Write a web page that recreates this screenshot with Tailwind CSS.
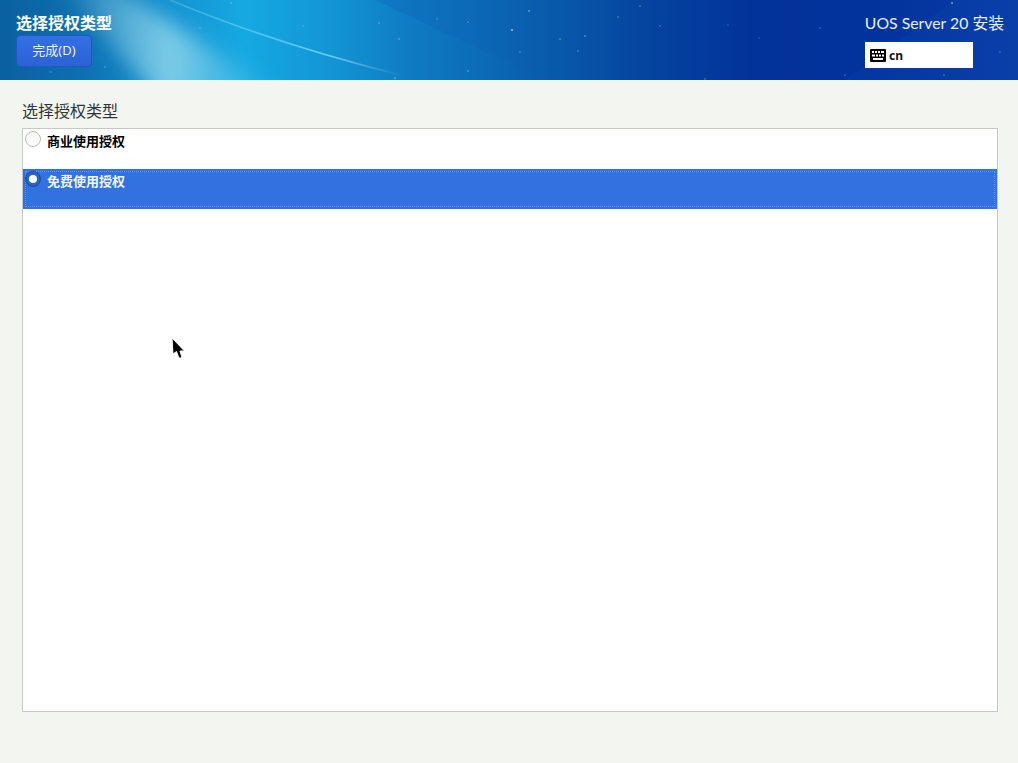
<!DOCTYPE html>
<html lang="zh-CN">
<head>
  <meta charset="UTF-8" />
  <meta name="viewport" content="width=device-width, initial-scale=1.0" />
  <title>选择授权类型</title>
  <script src="https://cdn.jsdelivr.net/npm/@tailwindcss/browser@4"></script>
</head>
<body class="relative w-[1018px] h-[763px] overflow-hidden bg-[#f3f5f1] font-['Noto_Sans','Noto_Sans_CJK_SC',sans-serif]">

  <!-- header -->
  <header class="relative h-[80px] overflow-hidden bg-[linear-gradient(90deg,#0a60a0_0%,#0d70b0_8%,#1590cf_16%,#15a9e2_24%,#1496d6_32%,#0f7cc4_40%,#0a5fae_52%,#05449f_63%,#02339a_74%,#02329c_86%,#0a3ca6_100%)]">
    <!-- wallpaper: light streak, curve, stars -->
    <svg class="absolute inset-0" width="1018" height="80" viewBox="0 0 1018 80">
      <defs>
        <linearGradient id="streak" x1="0" y1="0" x2="1" y2="0">
          <stop offset="0" stop-color="#a8dce8" stop-opacity="0"/>
          <stop offset="0.5" stop-color="#a0e0f0" stop-opacity="0.75"/>
          <stop offset="1" stop-color="#5cc8ee" stop-opacity="0"/>
        </linearGradient>
        <linearGradient id="curve" x1="0" y1="0" x2="1" y2="0">
          <stop offset="0" stop-color="#7fdcf5" stop-opacity="0.3"/>
          <stop offset="0.7" stop-color="#7fdcf5" stop-opacity="0.8"/>
          <stop offset="1" stop-color="#7fdcf5" stop-opacity="0"/>
        </linearGradient>
        <linearGradient id="band" x1="0" y1="0" x2="1" y2="0">
          <stop offset="0" stop-color="#0a58ae" stop-opacity="0.25"/>
          <stop offset="1" stop-color="#0a58ae" stop-opacity="0"/>
        </linearGradient>
        <filter id="blur"><feGaussianBlur stdDeviation="10"/></filter>
        <filter id="soft"><feGaussianBlur stdDeviation="0.6"/></filter>
      </defs>
      <polygon points="55,-20 105,-20 290,100 160,100" fill="url(#streak)" filter="url(#blur)"/>
      <path d="M170 0 C230 25 300 50 400 75" fill="none" stroke="url(#curve)" stroke-width="1.6" filter="url(#soft)"/>
      <polygon points="375,0 680,0 680,80 545,80" fill="url(#band)"/>
      <polygon points="955,0 1018,0 1018,80 845,80" fill="#0a46b0" opacity="0.25"/>
      <g fill="#a8d8f5">
        <circle cx="231" cy="3" r="1" opacity=".45"/><circle cx="200" cy="28" r=".9" opacity=".3"/>
        <circle cx="105" cy="67" r=".9" opacity=".35"/><circle cx="51" cy="72" r=".9" opacity=".35"/>
        <circle cx="303" cy="26" r=".9" opacity=".3"/><circle cx="379" cy="23" r=".9" opacity=".4"/>
        <circle cx="399" cy="39" r=".9" opacity=".4"/><circle cx="437" cy="19" r=".9" opacity=".35"/>
        <circle cx="468" cy="22" r=".9" opacity=".35"/><circle cx="512" cy="30" r="1.1" opacity=".75"/>
        <circle cx="529" cy="11" r="1" opacity=".5"/><circle cx="520" cy="52" r=".9" opacity=".35"/>
        <circle cx="560" cy="39" r=".9" opacity=".4"/><circle cx="585" cy="36" r=".9" opacity=".45"/>
        <circle cx="578" cy="51" r=".9" opacity=".4"/><circle cx="618" cy="17" r=".9" opacity=".35"/>
        <circle cx="640" cy="6" r=".9" opacity=".35"/><circle cx="660" cy="26" r=".9" opacity=".3"/>
        <circle cx="468" cy="71" r=".9" opacity=".4"/><circle cx="395" cy="78" r=".9" opacity=".5"/>
        <circle cx="728" cy="25" r=".8" opacity=".3"/><circle cx="759" cy="38" r=".8" opacity=".3"/>
        <circle cx="820" cy="28" r=".9" opacity=".3"/><circle cx="952" cy="3" r="1.1" opacity=".6"/>
        <circle cx="944" cy="75" r=".9" opacity=".35"/><circle cx="1000" cy="52" r=".9" opacity=".3"/>
        <circle cx="845" cy="75" r=".9" opacity=".3"/><circle cx="705" cy="79" r=".9" opacity=".35"/>
      </g>
    </svg>

    <div class="relative flex justify-between h-full pl-[16px] pr-[14px]">
      <div>
        <h1 class="pt-[12px] h-[35px] text-[16px] leading-[22px] font-bold text-white">选择授权类型</h1>
        <button class="w-[76px] h-[32px] rounded-[4px] border border-[#2159c4] bg-[linear-gradient(180deg,#3370e4,#2b62d6)] text-[13px] text-white/95">完成(D)</button>
      </div>
      <div class="flex flex-col items-end">
        <p class="pt-[12px] h-[42px] text-[15.800px] leading-[22px] text-[#e8f0fa] font-['Lato','Noto_Sans_CJK_SC',sans-serif]">UOS Server 20 安装</p>
        <div class="flex items-center gap-[3px] w-[108px] h-[26px] mr-[31px] pl-[5px] bg-white">
          <svg width="16" height="13" viewBox="0 0 16 13">
            <rect width="16" height="13" rx="1" fill="#000"/>
            <g fill="#fff">
              <rect x="2" y="2" width="2" height="2"/><rect x="5" y="2" width="2" height="2"/><rect x="8" y="2" width="2" height="2"/><rect x="11" y="2" width="3" height="2"/>
              <rect x="2" y="5.500" width="3" height="2"/><rect x="6" y="5.500" width="2" height="2"/><rect x="9" y="5.500" width="2" height="2"/><rect x="12" y="5.500" width="2" height="2"/>
              <rect x="3" y="9" width="10" height="2"/>
            </g>
          </svg>
          <span class="text-[12px] font-bold leading-none text-[#111] translate-y-px">cn</span>
        </div>
      </div>
    </div>
  </header>

  <!-- content -->
  <main class="pt-[21px] px-[22px]">
    <p class="h-[27px] text-[16px] leading-[20px] text-[#2e3436]">选择授权类型</p>
    <div class="w-[976px] h-[584px] border border-[#c8c8c2] bg-white">
      <div class="flex h-[40px] pl-[2px] pt-[2px]">
        <span class="w-[16px] h-[16px] rounded-full border border-[#bcbcb6] bg-[linear-gradient(180deg,#f4f4f2,#fff)]"></span>
        <span class="ml-[6px] text-[13px] leading-[20px] font-bold text-black">商业使用授权</span>
      </div>
      <div class="h-[40px] bg-[#3272e0] p-[2px]">
        <div class="flex h-full border border-dotted border-white/25">
          <span class="flex items-center justify-center -mt-px -ml-px w-[16px] h-[16px] rounded-full border border-[#1d4a9c] bg-[#2a62c4]">
            <span class="w-[8px] h-[8px] rounded-full bg-white"></span>
          </span>
          <span class="ml-[6px] -mt-px text-[13px] leading-[20px] font-bold text-[#f2f6fd]">免费使用授权</span>
        </div>
      </div>
    </div>
  </main>

  <!-- mouse pointer -->
  <svg class="absolute left-[170px] top-[336px]" width="16" height="24" viewBox="0 0 16 24">
    <path d="M2 2 L3 18 L6.500 15.500 L8.500 21 C9.500 23 12 22 11.500 20 L10 15 L14.500 15 Z" fill="#000" stroke="#fff" stroke-width="1"/>
  </svg>
</body>
</html>
